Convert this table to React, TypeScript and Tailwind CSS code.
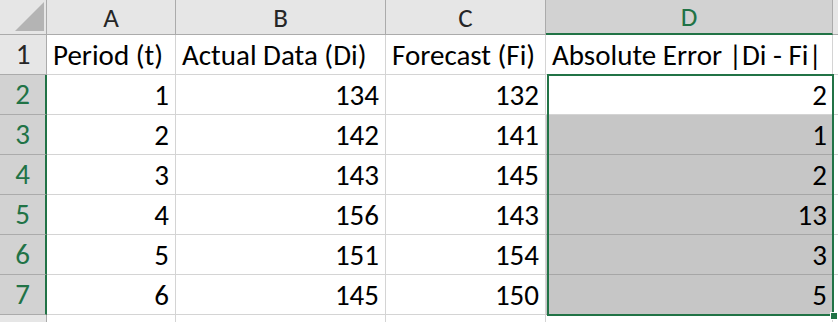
import React from "react";

const cols = ["A", "B", "C", "D"];
const headers = ["Period (t)", "Actual Data (Di)", "Forecast (Fi)", "Absolute Error |Di - Fi|"];
const rows = [
  [1, 134, 132, 2],
  [2, 142, 141, 1],
  [3, 143, 145, 2],
  [4, 156, 143, 13],
  [5, 151, 154, 3],
  [6, 145, 150, 5],
];

const font = { fontFamily: "Calibri, Carlito, Lato, 'Open Sans', 'Liberation Sans', sans-serif" };

export default function App() {
  return (
    <div className="relative w-[838px] h-[322px] overflow-hidden bg-white text-[29px] leading-none text-black" style={font}>
      <div className="grid grid-cols-[47px_129px_210px_160px_287px_1fr] grid-rows-[35px_repeat(7,40px)_1fr] h-full">
        {/* corner */}
        <div className="relative bg-[#e6e6e6] border-r border-b border-[#ababab]">
          <div className="absolute right-[2px] bottom-[3px] w-0 h-0 border-l-[29px] border-l-transparent border-b-[29px] border-b-[#b4b4b4]" />
        </div>
        {cols.map((c) =>
          c === "D" ? (
            <div key={c} className="flex items-center justify-center bg-[#d2d2d2] border-r border-[#ababab] border-b-2 border-b-[#217346] text-[#217346] text-[27px]">
              {c}
            </div>
          ) : (
            <div key={c} className="flex items-center justify-center bg-[#e6e6e6] border-r border-b border-[#ababab] text-[#262626] text-[27px]">
              {c}
            </div>
          )
        )}
        <div className="bg-[#e6e6e6] border-b border-[#ababab]" />

        {/* row 1 */}
        <div className="flex items-center justify-center bg-[#e6e6e6] border-r border-b border-[#ababab] text-[#262626]">1</div>
        {headers.map((h) => (
          <div key={h} className="flex items-center px-[6px] pt-[2px] border-r border-b border-[#d4d4d4] whitespace-nowrap">
            {h}
          </div>
        ))}
        <div className="border-b border-[#d4d4d4]" />

        {rows.map((r, i) => (
          <React.Fragment key={i}>
            <div className="flex items-center justify-center bg-[#d2d2d2] border-b border-[#ababab] border-r-2 border-r-[#217346] text-[#217346]">
              {i + 2}
            </div>
            {r.map((v, j) => (
              <div
                key={j}
                className={
                  j === 3
                    ? i === 0
                      ? "flex items-center justify-end px-[6px] pt-[2px] bg-white border-b border-[#d4d4d4]"
                      : "flex items-center justify-end px-[6px] pt-[2px] bg-[#c6c6c6] border-b border-[#a6a6a6]"
                    : "flex items-center justify-end px-[6px] pt-[2px] border-r border-b border-[#d4d4d4]"
                }
              >
                {v}
              </div>
            ))}
            <div className="border-b border-l border-[#d4d4d4]" />
          </React.Fragment>
        ))}

        {/* row 8 partial */}
        <div className="bg-[#e6e6e6] border-r border-[#ababab]" />
        <div className="border-r border-[#d4d4d4]" />
        <div className="border-r border-[#d4d4d4]" />
        <div className="border-r border-[#d4d4d4]" />
        <div className="border-r border-[#d4d4d4]" />
        <div />
      </div>

      {/* selection outline */}
      <div className="absolute left-[547px] top-[74px] w-[287px] h-[242px] border-2 border-[#217346] pointer-events-none" />
      <div className="absolute left-[830px] top-[312px] w-[6px] h-[6px] bg-[#217346] border border-white box-content" />
    </div>
  );
}
